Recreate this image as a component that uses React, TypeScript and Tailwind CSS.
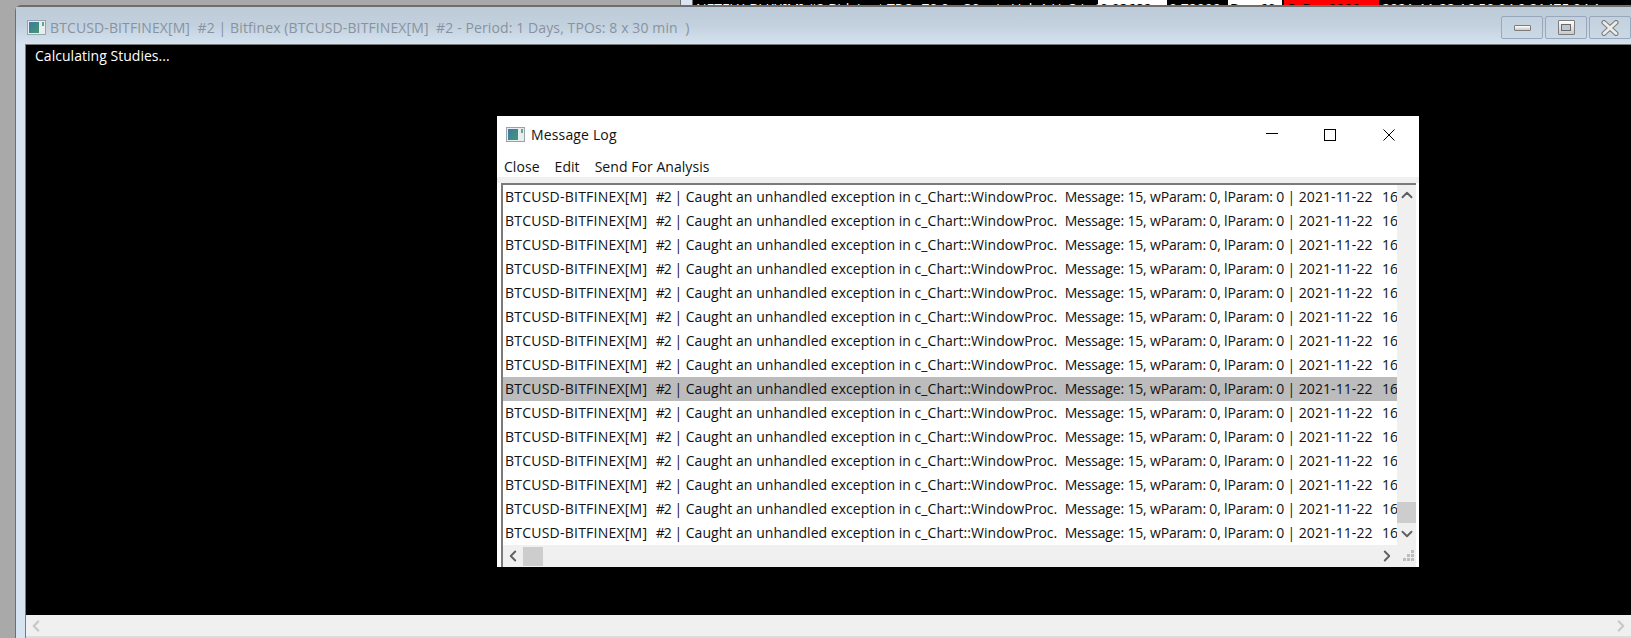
import { ChevronDown, ChevronLeft, ChevronRight, ChevronUp } from "lucide-react";

const ui = "font-['Open_Sans','Noto_Sans',sans-serif]";

function AppIcon({ id }: { id: string }) {
  return (
    <svg width="19" height="15" viewBox="0 0 19 15" className="shrink-0">
      <defs>
        <linearGradient id={id} x1="0" y1="0" x2="1" y2="1">
          <stop offset="0" stopColor="#3f78a8" />
          <stop offset="1" stopColor="#3f9a6e" />
        </linearGradient>
      </defs>
      <rect x="0.5" y="0.5" width="18" height="14" fill="#e9edf0" stroke="#98a3ab" />
      <rect x="2" y="2" width="10" height="11" fill={`url(#${id})`} />
      <rect x="15" y="2" width="2" height="4" fill="#57ad83" />
    </svg>
  );
}

function CaptionButton({ children }: { children: React.ReactNode }) {
  return (
    <div className="flex h-[23px] w-[42px] items-center justify-center rounded-[2px] border border-[#97a8bd] bg-gradient-to-b from-[#c3d1df] to-[#cbd8e5]">
      {children}
    </div>
  );
}

function LogRow({ selected }: { selected?: boolean }) {
  return (
    <div className={`h-[24px] overflow-hidden whitespace-pre pl-[2px] text-[14px] leading-[24px] text-[#111] ${selected ? "bg-[#bcbcbc]" : ""}`}>
      <span className="tracking-[0.23px]">BTCUSD-BITFINEX[M]</span>
      <span className="tracking-[0.6px]">  </span>
      <span className="tracking-[-1px]">#2</span>
      <span> | </span>
      <span className="tracking-[0.04px]">Caught an unhandled exception in c_Chart::WindowProc.  </span>
      <span className="tracking-[-0.18px]">Message: 15, wParam: 0, lParam: 0 </span>
      <span>| </span>
      <span className="tracking-[0.08px]">2021-11-22</span>
      <span className="tracking-[1px]">  </span>
      <span>16</span>
    </div>
  );
}

function MessageLog() {
  return (
    <div className={`absolute left-[497px] top-[116px] flex h-[451px] w-[922px] flex-col bg-white ${ui}`}>
      <div className="flex h-[37px] shrink-0 items-center">
        <div className="ml-[9px] mr-[6px]">
          <AppIcon id="dlg-icon" />
        </div>
        <span className="text-[14px] tracking-[0.15px] text-[#111]">Message Log</span>
        <div className="ml-auto mr-[24px] flex items-center gap-[46px]">
          <svg width="12" height="12" viewBox="0 0 12 12" className="-translate-y-[1px]">
            <path d="M0 5.5H12" stroke="#000" fill="none" />
          </svg>
          <svg width="12" height="12" viewBox="0 0 12 12">
            <rect x="0.5" y="0.5" width="11" height="11" stroke="#000" fill="none" />
          </svg>
          <svg width="12" height="12" viewBox="0 0 12 12" className="ml-[1px]">
            <path d="M0.5 0.5L11.5 11.5M11.5 0.5L0.5 11.5" stroke="#000" fill="none" />
          </svg>
        </div>
      </div>
      <div className="flex h-[24px] shrink-0 items-center gap-[15px] pl-[7px] pt-[3px] text-[14px] tracking-[0.05px] text-[#111]">
        <span>Close</span>
        <span>Edit</span>
        <span>Send For Analysis</span>
      </div>
      <div className="h-[6px] shrink-0 bg-[#f0f0f0]" />
      <div className="ml-[4px] mr-[3px] flex min-h-0 flex-1 flex-col border-l-2 border-t-2 border-[#7a7a7a]">
        <div className="flex min-h-0 flex-1">
          <div className="min-w-0 flex-1 overflow-hidden">
            {Array.from({ length: 15 }, (_, i) => (
              <LogRow key={i} selected={i === 8} />
            ))}
          </div>
          <div className="flex w-[19px] shrink-0 flex-col bg-[#f0f0f0]">
            <div className="flex h-[20px] items-center justify-center">
              <ChevronUp size={18} strokeWidth={2.5} className="text-[#606060]" />
            </div>
            <div className="flex-1" />
            <div className="h-[21px] bg-[#cdcdcd]" />
            <div className="flex h-[22px] items-center justify-center">
              <ChevronDown size={18} strokeWidth={2.5} className="text-[#606060]" />
            </div>
          </div>
        </div>
        <div className="flex h-[22px] shrink-0 items-center bg-[#f0f0f0]">
          <div className="flex w-[20px] justify-center">
            <ChevronLeft size={18} strokeWidth={2.5} className="text-[#606060]" />
          </div>
          <div className="h-[19px] w-[20px] bg-[#cdcdcd]" />
          <div className="ml-auto mr-[19px] flex w-[20px] justify-center">
            <ChevronRight size={18} strokeWidth={2.5} className="text-[#606060]" />
          </div>
        </div>
      </div>
      <svg width="12" height="12" viewBox="0 0 12 12" className="absolute bottom-[5px] right-[4px]">
        <g fill="#bdbdbd">
          <rect x="8" y="0" width="3" height="3" />
          <rect x="4" y="4" width="3" height="3" />
          <rect x="8" y="4" width="3" height="3" />
          <rect x="0" y="8" width="3" height="3" />
          <rect x="4" y="8" width="3" height="3" />
          <rect x="8" y="8" width="3" height="3" />
        </g>
      </svg>
    </div>
  );
}

export default function App() {
  return (
    <div className="relative h-[638px] w-[1631px] overflow-hidden bg-[#a9a9a9]">
      {/* sliver of the chart window behind, only the tops of its text show */}
      <div className={`flex h-[5px] overflow-hidden whitespace-nowrap text-[14px] leading-[14px] ${ui}`}>
        <div className="w-[680px] shrink-0" />
        <div className="w-[13px] shrink-0 border-x border-[#6f6f6f] bg-[#d9e6f2]" />
        <div className="w-[405px] shrink-0 overflow-hidden bg-black pl-[3px] pt-[2px] text-white">
          NETFLX-BLKX[M]  #2   Bid: Last TPO: 70.0 x 30 min  Vol: 1  H: 3  L: 2
        </div>
        <div className="w-[69px] shrink-0 overflow-hidden bg-white pl-[2px] pt-[2px] text-black">0.03682</div>
        <div className="w-[61px] shrink-0 overflow-hidden bg-black pl-[2px] pt-[2px] text-white">0.72000</div>
        <div className="w-[54px] shrink-0 overflow-hidden bg-white pl-[2px] pt-[2px] text-black">Bar: 60</div>
        <div className="w-[2px] shrink-0 bg-black" />
        <div className="w-[95px] shrink-0 overflow-hidden bg-[#ff0000] pl-[2px] pt-[2px] text-black">C: Bar 0000</div>
        <div className="min-w-0 flex-1 overflow-hidden bg-black pl-[3px] pt-[2px] text-white">
          2021-11-22 16:50:04.0  21475 04:1
        </div>
      </div>

      <div className="ml-[15px] flex h-[633px] flex-col rounded-tl-[6px] border-l border-t-2 border-[#6e6e6e] bg-[#d6e4f1]">
        <div className="flex h-[37px] shrink-0 items-center bg-gradient-to-b from-[#bdcbd9] via-[#c3d1df] to-[#d5e3f0] pl-[11px] pt-[4px]">
          <AppIcon id="win-icon" />
          <span className={`ml-[4px] whitespace-pre text-[14px] tracking-[0.11px] text-[#87939e] ${ui}`}>
            BTCUSD-BITFINEX[M]  #2 | Bitfinex (BTCUSD-BITFINEX[M]  #2 - Period: 1 Days, TPOs: 8 x 30 min  )
          </span>
          <div className="ml-auto flex gap-[2px] self-start pt-[5px]">
            <CaptionButton>
              <div className="h-[6px] w-[17px] rounded-[1px] border border-[#7d7d7d] bg-gradient-to-b from-white to-[#c9c9c9]" />
            </CaptionButton>
            <CaptionButton>
              <div className="flex h-[15px] w-[17px] items-center justify-center rounded-[1px] border border-[#7d7d7d] bg-gradient-to-b from-white to-[#c9c9c9]">
                <div className="h-[7px] w-[10px] border border-[#6a6a6a] bg-[#b9c6d3]" />
              </div>
            </CaptionButton>
            <CaptionButton>
              <svg width="18" height="16" viewBox="0 0 18 16">
                <path d="M3 2.5L15 13.5M15 2.5L3 13.5" stroke="#7a7a7a" strokeWidth="5" fill="none" strokeLinecap="round" />
                <path d="M3 2.5L15 13.5M15 2.5L3 13.5" stroke="#ececec" strokeWidth="3" fill="none" strokeLinecap="round" />
              </svg>
            </CaptionButton>
          </div>
        </div>
        <div className="flex min-h-0 flex-1 pl-[9px]">
          <div className="flex min-w-0 flex-1 flex-col border-l border-t border-[#7a7a7a]">
            <div className={`flex-1 bg-black pl-[9px] pt-[1px] text-[14px] leading-[20px] tracking-[0.03px] text-white ${ui}`}>
              Calculating Studies...
            </div>
            <div className="flex h-[21px] shrink-0 items-center justify-between bg-[#f0f0f0] px-[1px]">
              <ChevronLeft size={18} strokeWidth={3} className="text-[#c8c8c8]" />
              <ChevronRight size={18} strokeWidth={3} className="text-[#c8c8c8]" />
            </div>
            <div className="h-[2px] shrink-0 bg-[#dcdcdc]" />
          </div>
        </div>
      </div>

      <MessageLog />
    </div>
  );
}
